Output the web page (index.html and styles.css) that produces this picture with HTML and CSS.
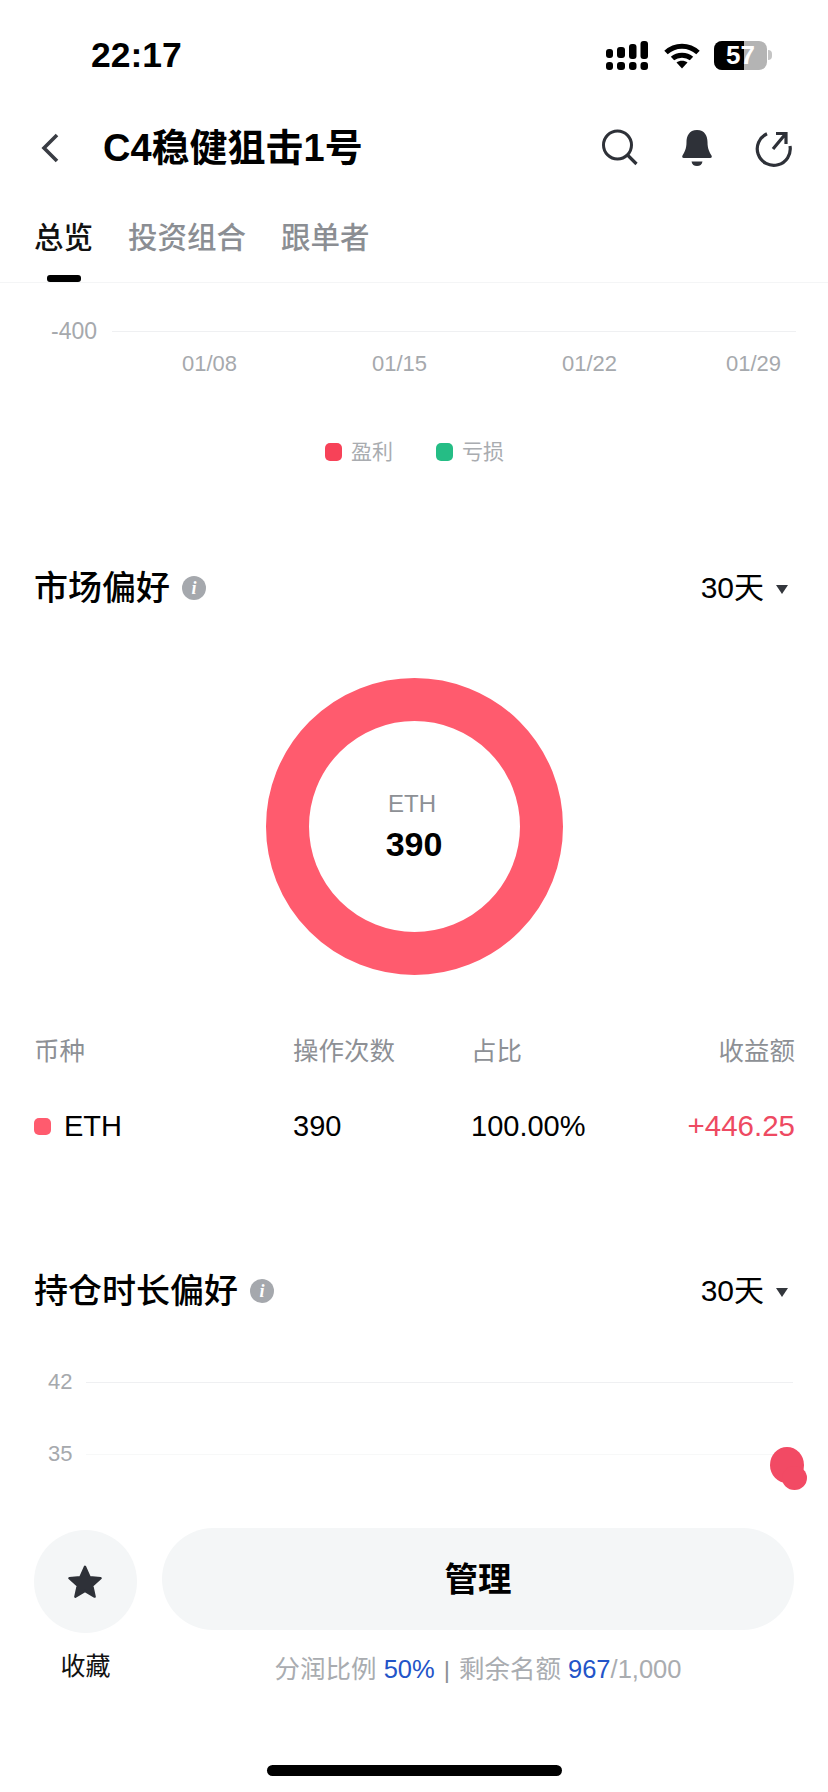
FILE: index.html
```html
<!DOCTYPE html>
<html lang="zh-CN">
<head>
<meta charset="utf-8">
<title>C4稳健狙击1号</title>
<link rel="stylesheet" href="styles.css">
</head>
<body>
<div class="page">
  <header class="top">
    <div class="status">
      <span class="time">22:17</span>
      <div class="status-icons">
        <svg class="signal" width="42" height="29" viewBox="0 0 42 29"><g fill="#000"><rect x="0" y="8" width="7" height="9" rx="3"/><rect x="11" y="6" width="8" height="11" rx="3"/><rect x="23" y="3" width="7.5" height="15" rx="3"/><rect x="34.500" y="0" width="7.500" height="18" rx="3"/><rect x="0" y="21" width="7" height="8" rx="3"/><rect x="11" y="21" width="8" height="8" rx="3"/><rect x="23" y="21" width="7.5" height="8" rx="3"/><rect x="34.500" y="21" width="7.500" height="8" rx="3"/></g></svg>
        <svg class="wifi" width="36" height="27" viewBox="0 0 36 27"><g fill="none" stroke="#000" stroke-width="5"><path d="M2 10.5C11 2 25 2 34 10.5"/><path d="M8.5 16.5C13.5 12 22.5 12 27.5 16.5"/></g><path d="M12.5 20.5C15.5 18 20.5 18 23.5 20.5L18 26.5Z" fill="#000"/></svg>
        <div class="battery"><span class="battery-level"></span><span class="battery-num">57</span></div>
        <span class="battery-tip"></span>
      </div>
    </div>
    <nav class="nav">
      <svg class="back" width="18" height="30" viewBox="0 0 18 30"><path d="M16 2 3 15l13 13" fill="none" stroke="#3a3d44" stroke-width="3.6"/></svg>
      <h1 class="title">C4稳健狙击1号</h1>
      <div class="nav-icons">
        <svg width="38" height="38" viewBox="0 0 38 38"><circle cx="16.500" cy="16" r="14" fill="none" stroke="#2e3138" stroke-width="3"/><path d="M26.500 26 35.500 35" fill="none" stroke="#2e3138" stroke-width="3.200"/></svg>
        <svg width="34" height="38" viewBox="0 0 34 38"><path d="M17 1C9 1 6.500 7.500 6.500 13c0 7-2 10-4 13.500-.7 1.300-.2 2.500 1.300 2.500h26.400c1.500 0 2-1.200 1.300-2.500-2-3.500-4-6.500-4-13.500C27.500 7.500 25 1 17 1Z" fill="#2e3138"/><path d="M11.500 32.500h11C22 35.500 20 37 17 37s-5-1.500-5.500-4.500Z" fill="#2e3138"/></svg>
        <svg width="38" height="38" viewBox="0 0 38 38"><path d="M12 4.800A16.500 16.500 0 1 0 35 17" fill="none" stroke="#2e3138" stroke-width="3.200"/><path d="M18 20 30 5.500M21 4.500H31V15" fill="none" stroke="#2e3138" stroke-width="3.200"/></svg>
      </div>
    </nav>
    <div class="tabs">
      <div class="tab tab-active">总览<span class="tab-bar"></span></div>
      <div class="tab">投资组合</div>
      <div class="tab">跟单者</div>
    </div>
  </header>

  <main class="content">
    <div class="axis-row first-row"><span class="axis-label neg">-400</span><span class="grid-line"></span></div>
    <div class="dates"><span>01/08</span><span>01/15</span><span>01/22</span><span>01/29</span></div>
    <div class="legend">
      <span class="legend-item"><i class="swatch red"></i>盈利</span>
      <span class="legend-item"><i class="swatch green"></i>亏损</span>
    </div>

    <section class="section-head market-head">
      <div class="section-title"><h2>市场偏好</h2><span class="info">i</span></div>
      <div class="range">30天<i class="caret"></i></div>
    </section>

    <div class="donut-wrap">
      <div class="donut">
        <span class="donut-label">ETH</span>
        <strong class="donut-value">390</strong>
      </div>
    </div>

    <div class="table-row table-head">
      <span>币种</span><span>操作次数</span><span>占比</span><span class="right">收益额</span>
    </div>
    <div class="table-row table-body">
      <span class="coin"><i class="coin-dot"></i>ETH</span><span>390</span><span>100.00%</span><span class="right profit">+446.25</span>
    </div>

    <section class="section-head hold-head">
      <div class="section-title"><h2>持仓时长偏好</h2><span class="info">i</span></div>
      <div class="range">30天<i class="caret"></i></div>
    </section>

    <div class="scatter">
      <div class="axis-row"><span class="axis-label">42</span><span class="grid-line"></span></div>
      <div class="axis-row second"><span class="axis-label">35</span><span class="grid-line faint"></span></div>
      <span class="dot dot-big"></span>
      <span class="dot dot-small"></span>
    </div>
  </main>

  <footer class="bottom">
    <div class="actions">
      <div class="fav">
        <div class="fav-circle">
          <svg class="star" width="36" height="36" viewBox="0 0 38 38"><path d="M19 3l4.800 10.800 11.700 1.200-8.800 7.900 2.500 11.600L19 28.500 8.800 34.500l2.500-11.600L2.500 15l11.700-1.200Z" fill="#2e3138" stroke="#2e3138" stroke-width="2.500" stroke-linejoin="round"/></svg>
        </div>
        <span class="fav-label">收藏</span>
      </div>
      <div class="manage">
        <button class="manage-btn">管理</button>
        <p class="quota">分润比例 <b>50%</b><span class="sep">|</span>剩余名额 <b>967</b>/1,000</p>
      </div>
    </div>
    <div class="home-bar"></div>
  </footer>
</div>
</body>
</html>
```

FILE: styles.css
```css
* { box-sizing: border-box; }
html, body { margin: 0; padding: 0; background: #fff; }
body { font-family: "Liberation Sans", "Noto Sans CJK SC", sans-serif; color: #000; }
.page { width: 828px; height: 1792px; display: flex; flex-direction: column; overflow: hidden; background: #fff; }

.top { flex: none; }
.status { height: 110px; padding: 0 56px 0 91px; display: flex; align-items: center; justify-content: space-between; }
.time { font-size: 35.500px; font-weight: 700; line-height: 40px; }
.status-icons { display: flex; align-items: center; }
.signal { margin-right: 16px; }
.wifi { margin-right: 14px; }
.battery { position: relative; width: 53px; height: 29px; border-radius: 8px; background: #b4b4b4; overflow: hidden; display: flex; align-items: center; justify-content: center; }
.battery-level { position: absolute; left: 0; top: 0; bottom: 0; width: 30px; background: #000; }
.battery-num { position: relative; color: #fff; font-size: 26px; font-weight: 700; line-height: 29px; }
.battery-tip { width: 4px; height: 10px; margin-left: 1px; background: #c4c4c4; border-radius: 0 5px 5px 0; }

.nav { height: 76px; padding: 0 35px 0 41px; display: flex; align-items: center; }
.back { flex: none; }
.title { margin: 0 0 0 44px; font-size: 38px; font-weight: 700; line-height: 50px; flex: 1; }
.nav-icons { display: flex; align-items: center; gap: 41px; }

.tabs { height: 97px; padding: 32px 0 0 34px; display: flex; gap: 35px; border-bottom: 1px solid #f4f5f6; }
.tab { font-size: 29.500px; line-height: 40px; color: #8b8e93; font-weight: 500; width: fit-content; }
.tab-active { color: #111; display: flex; flex-direction: column; align-items: center; }
.tab-bar { width: 34px; height: 7px; margin-top: 17px; border-radius: 3px; background: #000; }

.content { flex: 1; min-height: 0; overflow: hidden; }
.axis-row { height: 28px; display: flex; align-items: center; padding-left: 48px; padding-right: 35px; }
.first-row { margin-top: 34px; padding-left: 51px; padding-right: 32px; }
.axis-label { font-size: 22px; color: #a6a9ad; line-height: 28px; flex: none; width: 38px; }
.axis-label.neg { width: 61px; font-size: 23px; }
.grid-line { flex: 1; height: 1px; background: #eff0f2; }
.grid-line.faint { background: #f7f8f8; }
.dates { margin-top: 5px; height: 28px; padding-left: 182px; display: grid; grid-template-columns: 190px 190px 164px auto; font-size: 22px; line-height: 28px; color: #a6a9ad; }
.legend { margin-top: 62px; height: 24px; padding-left: 325px; display: flex; gap: 43px; }
.legend-item { display: flex; align-items: center; gap: 9px; font-size: 21px; line-height: 24px; color: #a9acb0; }
.swatch { width: 17px; height: 18px; border-radius: 5px; }
.swatch.red { background: #f74258; }
.swatch.green { background: #25bd85; }

.section-head { height: 48px; padding: 0 40px 0 34px; display: flex; align-items: center; justify-content: space-between; }
.market-head { margin-top: 100px; }
.hold-head { margin-top: 123px; }
.section-title { display: flex; align-items: center; gap: 12px; }
.section-title h2 { margin: 0; font-size: 34px; font-weight: 500; line-height: 48px; }
.info { width: 24px; height: 24px; border-radius: 50%; background: #a5a8ad; color: #fff; display: flex; align-items: center; justify-content: center; font: italic 700 18px/24px "Liberation Serif", serif; }
.range { display: flex; align-items: center; font-size: 30px; line-height: 40px; }
.caret { margin-left: 12px; margin-top: 3px; width: 0; height: 0; border-left: 6.500px solid transparent; border-right: 6.500px solid transparent; border-top: 9px solid #33363c; }

.donut-wrap { margin-top: 66px; display: flex; justify-content: center; }
.donut { width: 297px; height: 297px; border-radius: 50%; border: 43px solid #ff5b6e; display: flex; flex-direction: column; align-items: center; justify-content: center; gap: 5px; }
.donut-label { font-size: 24px; line-height: 30px; color: #8d9095; margin-left: -4px; }
.donut-value { font-size: 34px; line-height: 40px; font-weight: 700; }

.table-row { display: grid; grid-template-columns: 259px 178px 1fr auto; padding: 0 33px 0 34px; }
.table-head { margin-top: 60px; height: 32px; font-size: 25.500px; line-height: 32px; color: #8d9095; }
.table-body { margin-top: 41px; height: 36px; font-size: 29px; line-height: 36px; }
.coin { display: flex; align-items: center; gap: 13px; }
.coin-dot { width: 17px; height: 17px; border-radius: 5px; background: #ff5b6e; }
.profit { color: #ee4a62; font-size: 29.500px; }

.scatter { position: relative; margin-top: 53px; }
.scatter .axis-label { width: 38px; }
.second { margin-top: 44px; }
.dot { position: absolute; border-radius: 50%; background: #f24a64; }
.dot-big { left: 770px; top: 79px; width: 34px; height: 36px; }
.dot-small { left: 782px; top: 98px; width: 25px; height: 24px; }

.bottom { flex: none; height: 282px; padding-top: 18px; background: #fff; }
.actions { display: flex; padding: 0 34px; gap: 25px; }
.fav { width: 103px; padding-top: 2px; display: flex; flex-direction: column; align-items: center; }
.fav-circle { width: 103px; height: 103px; border-radius: 50%; background: #f4f6f7; display: flex; align-items: center; justify-content: center; }
.star { margin-left: -2px; }
.fav-label { margin-top: 17px; font-size: 25px; line-height: 32px; color: #111; }
.manage { flex: 1; display: flex; flex-direction: column; align-items: center; }
.manage-btn { width: 100%; height: 102px; padding-top: 2px; border: 0; border-radius: 51px; background: #f4f6f7; font: 700 33.500px/44px "Liberation Sans", "Noto Sans CJK SC", sans-serif; color: #000; }
.quota { margin: 23px 0 0; font-size: 25.500px; line-height: 32px; color: #a9acb0; white-space: nowrap; }
.quota b { font-weight: 400; color: #2354c8; }
.sep { margin: 0 9px; color: #8d9095; font-size: 24px; }
.home-bar { width: 295px; height: 11px; margin: 79px 0 0 267px; border-radius: 6px; background: #000; }
```
